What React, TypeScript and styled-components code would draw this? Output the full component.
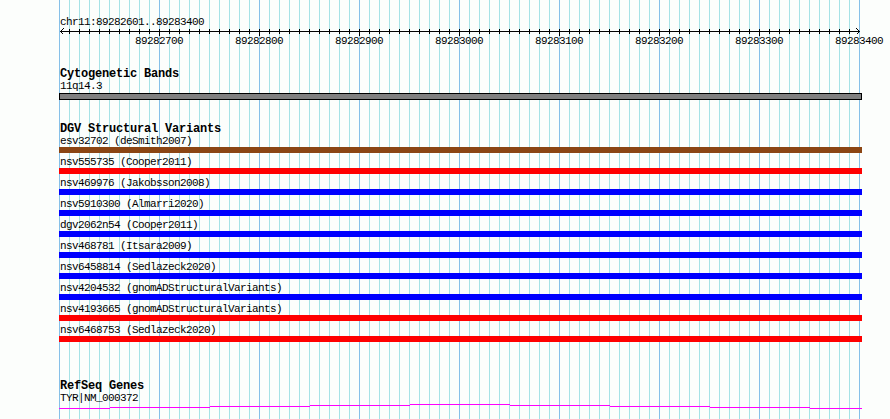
import styled, { createGlobalStyle } from "styled-components";

interface Variant {
  id: string;
  study: string;
  color: string;
}

const variants: Variant[] = [
  { id: "esv32702", study: "deSmith2007", color: "#8b4513" },
  { id: "nsv555735", study: "Cooper2011", color: "#ff0000" },
  { id: "nsv469976", study: "Jakobsson2008", color: "#0000ff" },
  { id: "nsv5910300", study: "Almarri2020", color: "#0000ff" },
  { id: "dgv2062n54", study: "Cooper2011", color: "#0000ff" },
  { id: "nsv468781", study: "Itsara2009", color: "#0000ff" },
  { id: "nsv6458814", study: "Sedlazeck2020", color: "#0000ff" },
  { id: "nsv4204532", study: "gnomADStructuralVariants", color: "#0000ff" },
  { id: "nsv4193665", study: "gnomADStructuralVariants", color: "#ff0000" },
  { id: "nsv6468753", study: "Sedlazeck2020", color: "#ff0000" },
];

// stepped gene line: [start, end, y] in panel pixels
const geneSegments: [number, number, number][] = [
  [0, 51, 4],
  [51, 151, 3],
  [151, 251, 2],
  [251, 351, 1],
  [351, 451, 0],
  [451, 551, 1],
  [551, 651, 2],
  [651, 751, 3],
  [751, 803, 4],
];

const start = 89282600;
const minorTicks = Array.from({ length: 79 }, (_, i) => (i + 1) * 10);
const majorTicks = [1, 2, 3, 4, 5, 6, 7, 8];

export default function App() {
  return (
    <>
      <GlobalStyle />
      <Page>
        <Canvas>
          <Ruler width={803} height={46}>
            <RulerText x={1} y={25}>
              chr11:89282601..89283400
            </RulerText>
            <line x1={1} y1={31.5} x2={801} y2={31.5} stroke="#000" />
            <polyline
              points="4.5,28.5 1.5,31.5 4.5,34.5"
              fill="none"
              stroke="#000"
            />
            <polyline
              points="797.5,28.5 800.5,31.5 797.5,34.5"
              fill="none"
              stroke="#000"
            />
            {minorTicks.map((x) => (
              <line
                key={x}
                x1={x + 0.5}
                y1={29}
                x2={x + 0.5}
                y2={x % 100 === 0 ? 36 : 34}
                stroke="#000"
              />
            ))}
            {majorTicks.map((k) => (
              <RulerText key={k} x={k * 100 - 24} y={44}>
                {start + k * 100}
              </RulerText>
            ))}
          </Ruler>

          <Track>
            <TrackTitle>Cytogenetic Bands</TrackTitle>
            <FeatureLabel>11q14.3</FeatureLabel>
            <Band />
          </Track>

          <Track $gap={23}>
            <TrackTitle>DGV Structural Variants</TrackTitle>
            {variants.map((v) => (
              <Feature key={v.id}>
                <FeatureLabel>
                  {v.id} ({v.study})
                </FeatureLabel>
                <Bar $color={v.color} />
              </Feature>
            ))}
          </Track>

          <Track $gap={35}>
            <TrackTitle>RefSeq Genes</TrackTitle>
            <FeatureLabel>TYR|NM_000372</FeatureLabel>
            <Gene width={803} height={5}>
              {geneSegments.map(([x1, x2, y]) => (
                <rect key={x1} x={x1} y={y} width={x2 - x1} height={1} fill="#ff00ff" />
              ))}
            </Gene>
          </Track>
        </Canvas>
      </Page>
    </>
  );
}

const GlobalStyle = createGlobalStyle`
  html, body {
    margin: 0;
    padding: 0;
    background: #fcfefc;
  }
  body {
    font-family: "Liberation Mono", "DejaVu Sans Mono", monospace;
    -webkit-font-smoothing: none;
  }
`;

const Page = styled.div`
  width: 890px;
  height: 419px;
  overflow: hidden;
  box-sizing: border-box;
  padding-left: 59px;
  background: #fcfefc;
`;

const Canvas = styled.div`
  width: 803px;
  height: 419px;
  display: flex;
  flex-direction: column;
  background-image: linear-gradient(
      to right,
      #86c0e8 0px,
      #86c0e8 1px,
      transparent 1px,
      transparent 100px
    ),
    linear-gradient(
      to right,
      #a6e2e6 0px,
      #a6e2e6 1px,
      transparent 1px,
      transparent 10px
    );
  background-size: 100px 100%, 10px 100%;
  background-repeat: repeat-x;
`;

const Ruler = styled.svg`
  display: block;
  overflow: visible;
  margin-bottom: 22px;
  shape-rendering: crispEdges;
`;

const RulerText = styled.text`
  font-family: "Liberation Mono", monospace;
  font-size: 11px;
  letter-spacing: -0.6px;
  fill: #000;
`;

const Track = styled.section<{ $gap?: number }>`
  display: flex;
  flex-direction: column;
  margin-top: ${({ $gap }) => $gap ?? 0}px;
`;

const TrackTitle = styled.h3`
  margin: 0;
  padding-left: 1px;
  height: 12px;
  font-size: 12px;
  line-height: 12px;
  font-weight: 700;
  letter-spacing: -0.2px;
  color: #000;
  white-space: nowrap;
`;

const FeatureLabel = styled.div`
  padding-left: 1px;
  height: 12px;
  font-size: 11px;
  line-height: 12px;
  letter-spacing: -0.6px;
  color: #000;
  white-space: nowrap;
`;

const Band = styled.div`
  margin-top: 1px;
  width: 803px;
  height: 7px;
  box-sizing: border-box;
  border: 1px solid #000;
  background: #808080;
`;

const Feature = styled.div`
  display: flex;
  flex-direction: column;
  margin-bottom: 3px;
`;

const Bar = styled.div<{ $color: string }>`
  width: 803px;
  height: 6px;
  background: ${({ $color }) => $color};
`;

const Gene = styled.svg`
  display: block;
  shape-rendering: crispEdges;
`;
